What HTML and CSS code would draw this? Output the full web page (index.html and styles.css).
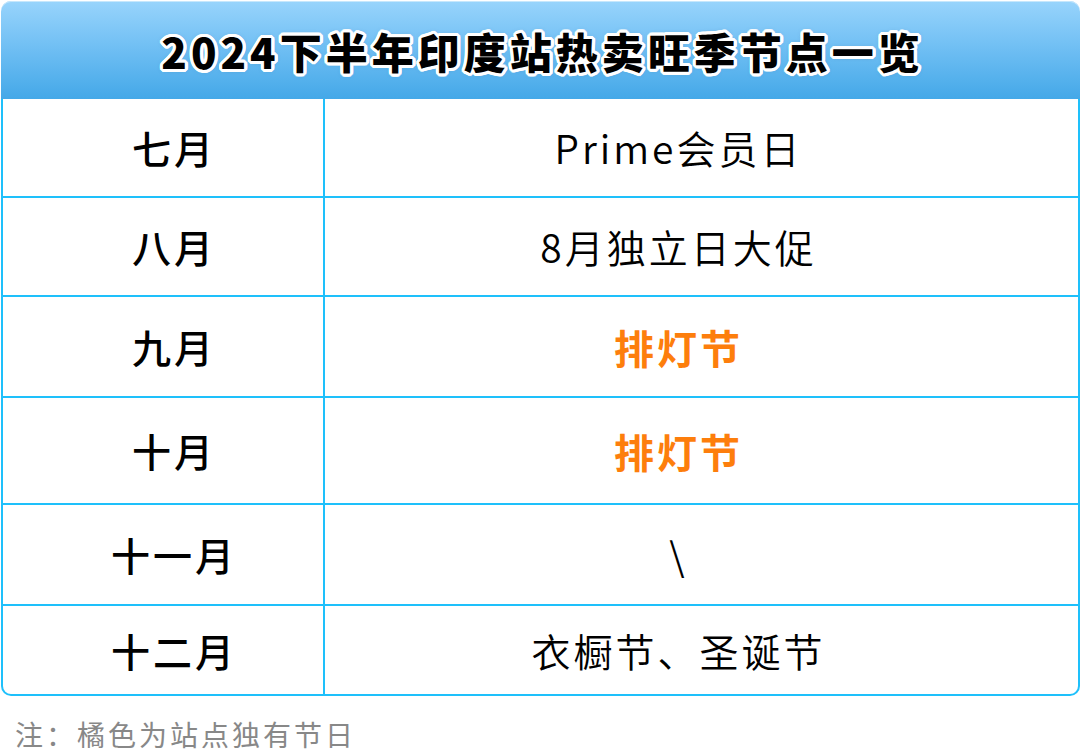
FILE: index.html
```html
<!DOCTYPE html>
<html lang="zh-CN">
<head>
<meta charset="utf-8">
<title>2024下半年印度站热卖旺季节点一览</title>
<link rel="stylesheet" href="styles.css">
</head>
<body>
<div class="page">
  <div class="table">
    <div class="head"><h1 class="title">2024下半年印度站热卖旺季节点一览</h1></div>
    <div class="body">
      <div class="row r1"><div class="month">七月</div><div class="event">Prime会员日</div></div>
      <div class="row r2"><div class="month">八月</div><div class="event">8月独立日大促</div></div>
      <div class="row r3"><div class="month">九月</div><div class="event local">排灯节</div></div>
      <div class="row r4"><div class="month">十月</div><div class="event local">排灯节</div></div>
      <div class="row r5"><div class="month">十一月</div><div class="event">\</div></div>
      <div class="row r6"><div class="month">十二月</div><div class="event">衣橱节、圣诞节</div></div>
    </div>
  </div>
  <p class="note">注：橘色为站点独有节日</p>
</div>
</body>
</html>
```
FILE: styles.css
```css
html, body {
  margin: 0;
  padding: 0;
  background: #ffffff;
}
body {
  font-family: "Noto Sans CJK SC", "Noto Sans", sans-serif;
  color: #000;
}
.page {
  width: 1082px;
  height: 755px;
  overflow: hidden;
  padding: 1px 0 0 1px;
  box-sizing: border-box;
}
.table {
  width: 1079px;
}
.head {
  height: 98px;
  border-radius: 10px 10px 0 0;
  background: linear-gradient(to bottom, #98d4fc 0%, #72c0f4 45%, #44a8e8 100%);
  box-shadow: inset 0 1px 0 #c6e7fc;
  display: flex;
  align-items: center;
  justify-content: center;
}
.title {
  margin: 0;
  font-size: 42px;
  font-weight: 900;
  letter-spacing: 4px;
  line-height: 1;
  padding-top: 2px;
  padding-left: 4px;
  color: #000;
  text-shadow:
    3px 0 0 #fff, -3px 0 0 #fff, 0 3px 0 #fff, 0 -3px 0 #fff,
    2px 2px 0 #fff, -2px 2px 0 #fff, 2px -2px 0 #fff, -2px -2px 0 #fff,
    3px 1px 0 #fff, -3px 1px 0 #fff, 3px -1px 0 #fff, -3px -1px 0 #fff,
    1px 3px 0 #fff, -1px 3px 0 #fff, 1px -3px 0 #fff, -1px -3px 0 #fff,
    0 0 5px rgba(60, 90, 120, 0.6);
}
.body {
  border: 2px solid #1ec0fb;
  border-top: none;
  border-radius: 0 0 10px 10px;
  overflow: hidden;
}
.row {
  display: grid;
  grid-template-columns: 322px 1fr;
  border-top: 2px solid #1ec0fb;
}
.row.r1 { border-top: none; height: 97px; }
.row.r2 { height: 97px; }
.row.r3 { height: 99px; }
.row.r4 { height: 105px; }
.row.r5 { height: 99px; }
.row.r6 { height: 88px; }
.month, .event {
  display: flex;
  align-items: center;
  justify-content: center;
  font-size: 39px;
  letter-spacing: 3px;
  line-height: 1;
}
.month {
  font-weight: 500;
  border-right: 2px solid #1ec0fb;
  padding-left: 22px;
}
.event {
  font-weight: 350;
  padding-right: 46px;
}
.event.local {
  color: #fd7e0c;
  font-weight: 700;
  font-size: 40px;
}
.note {
  margin: 24px 0 0 14px;
  font-size: 28px;
  letter-spacing: 3px;
  line-height: 1;
  color: #888888;
}
```
